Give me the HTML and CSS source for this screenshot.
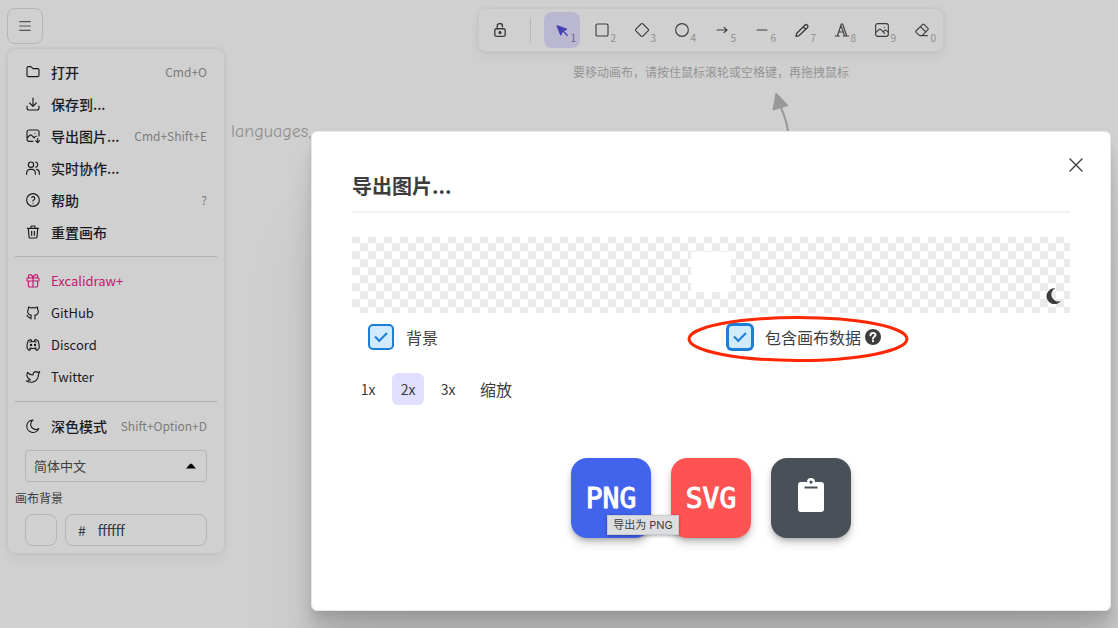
FILE: index.html
```html
<!DOCTYPE html>
<html lang="zh-CN">
<head>
<meta charset="utf-8">
<title>Excalidraw</title>
<meta name="viewport" content="width=device-width, initial-scale=1">
<link rel="stylesheet" href="styles.css">
</head>
<body>
<div class="app">
  <aside class="side">
    <button class="burger" type="button" aria-label="菜单"><svg class="icon" viewBox="0 0 24 24"><path d="M4 5.500h16M4 12h16M4 18.500h16"/></svg></button>
    <nav class="menu">
      <button class="item" type="button"><svg class="icon" viewBox="0 0 24 24"><path d="M5 4h4l3 3h7a2 2 0 0 1 2 2v8a2 2 0 0 1-2 2H5a2 2 0 0 1-2-2V6a2 2 0 0 1 2-2z"/></svg><span>打开</span><kbd>Cmd+O</kbd></button>
      <button class="item" type="button"><svg class="icon" viewBox="0 0 24 24"><path d="M3 15v3a3 3 0 0 0 3 3h12a3 3 0 0 0 3-3v-3M7 10.500l5 5 5-5M12 3v12.500"/></svg><span>保存到...</span></button>
      <button class="item" type="button"><svg class="icon" viewBox="0 0 24 24"><path d="M15 8h.01M12 20H6a3 3 0 0 1-3-3V6a3 3 0 0 1 3-3h12a3 3 0 0 1 3 3v6M3 15l4-4c.93-.9 2.070-.9 3 0l4 4M14 14l1-1c.62-.6 1.300-.8 2-.6M19 15.500V22M16 19l3 3 3-3"/></svg><span>导出图片...</span><kbd>Cmd+Shift+E</kbd></button>
      <button class="item" type="button"><svg class="icon" viewBox="0 0 24 24"><circle cx="9" cy="7" r="4"/><path d="M2.500 21.500v-2.500a5 5 0 0 1 5-5h3a5 5 0 0 1 5 5v2.500M16 3.100a4 4 0 0 1 0 7.800M21.500 21.500V19a5 5 0 0 0-4-4.900"/></svg><span>实时协作...</span></button>
      <button class="item" type="button"><svg class="icon" viewBox="0 0 24 24"><circle cx="12" cy="12" r="9.500"/><path d="M12 17v.01M12 13.500a1.500 1.500 0 0 1 1-1.500 2.600 2.600 0 1 0-3-4"/></svg><span>帮助</span><kbd>?</kbd></button>
      <button class="item" type="button"><svg class="icon" viewBox="0 0 24 24"><path d="M3.500 6.500h17M10 11v6M14 11v6M5 6.500l1 12.500a2 2 0 0 0 2 2h8a2 2 0 0 0 2-2l1-12.500M9 6.500V4a1 1 0 0 1 1-1h4a1 1 0 0 1 1 1v2.500"/></svg><span>重置画布</span></button>
      <hr>
      <a class="item plus" href="#plus"><svg class="icon" viewBox="0 0 24 24"><path d="M4 7.500h16a1 1 0 0 1 1 1V11a1 1 0 0 1-1 1H4a1 1 0 0 1-1-1V8.500a1 1 0 0 1 1-1zM12 7.500V21M19 12v7a2 2 0 0 1-2 2H7a2 2 0 0 1-2-2v-7M7.500 7.500a2.500 2.500 0 0 1 0-5c2-.1 3.600 1.900 4.500 5 .9-3.100 2.500-5.100 4.500-5a2.500 2.500 0 0 1 0 5"/></svg><span>Excalidraw+</span></a>
      <a class="item" href="#github"><svg class="icon" viewBox="0 0 24 24"><path d="M9 19c-4.300 1.400-4.300-2.500-6-3m12 5v-3.500c0-1 .1-1.400-.5-2 2.800-.3 5.500-1.400 5.500-6a4.600 4.600 0 0 0-1.300-3.200 4.200 4.200 0 0 0-.1-3.200s-1.100-.3-3.500 1.300a12.300 12.300 0 0 0-6.200 0C6.500 2.800 5.400 3.100 5.400 3.100a4.200 4.200 0 0 0-.1 3.200A4.600 4.600 0 0 0 4 9.500c0 4.600 2.700 5.700 5.500 6-.6.6-.6 1.200-.5 2V21"/></svg><span>GitHub</span></a>
      <a class="item" href="#discord"><svg class="icon" viewBox="0 0 24 24"><path d="M7 7.500c3.500-1 6.500-1 10 0M7 16.500c3.500 1 6.500 1 10 0M15.500 17c0 1 1.500 3 2 3 1.500 0 2.800-1.700 3.500-3 .7-1.700.5-5.800-1.500-11.500-1.500-1-3-1.300-4.500-1.500l-1 2.500M8.500 17c0 1-1.400 3-1.800 3-1.400 0-2.700-1.700-3.300-3-.7-1.700-.5-5.800 1.300-11.500C6.200 4.500 7.500 4.200 9 4l1 2.500"/><circle cx="9" cy="12" r="1"/><circle cx="15" cy="12" r="1"/></svg><span>Discord</span></a>
      <a class="item" href="#twitter"><svg class="icon" viewBox="0 0 24 24"><path d="M22 4c-1 .5-2 .7-3 1-1.100-1.300-2.800-1.300-4.400-.7S12 6.300 12 8v1c-3.200.1-6.100-1.400-8-4 0 0-4.200 7.400 4 11-1.900 1.200-3.700 2.100-6 2 3.300 1.800 6.900 2.400 10 1.500 3.600-1 6.500-3.700 7.700-7.700a13.800 13.800 0 0 0 .5-3.700c0-.2 1.500-2.800 1.800-4.100z"/></svg><span>Twitter</span></a>
      <hr>
      <button class="item" type="button"><svg class="icon" viewBox="0 0 24 24"><path d="M11.500 3h.5A7.500 7.500 0 0 0 20.500 16 9.300 9.300 0 1 1 11.500 3z"/></svg><span>深色模式</span><kbd>Shift+Option+D</kbd></button>
      <div class="language">
        <select aria-label="语言"><option>简体中文</option><option>English</option></select>
        <svg class="caret" viewBox="0 0 10 6"><path d="M0 5.500 4 1a1.300 1.300 0 0 1 2 0l4 4.500z"/></svg>
      </div>
      <label class="bg-label" for="bg">画布背景</label>
      <div class="color">
        <button class="swatch" type="button" aria-label="画布背景颜色"></button>
        <div class="hex"><span>#</span><input id="bg" type="text" value="ffffff"></div>
      </div>
    </nav>
  </aside>
  <div class="welcome">languages,</div>

  <main class="stage">
    <div class="toolbar">
      <button class="tool" type="button" aria-label="锁定"><svg class="icon" viewBox="0 0 20 20"><rect x="3.500" y="8.500" width="13" height="9.500" rx="2"/><path d="M6.500 8.500V5.500a3.300 3.300 0 0 1 6.600-.5V6"/><circle class="solid" cx="10" cy="13.200" r="1.200"/></svg></button>
      <span class="split"></span>
      <div class="tools">
        <button class="tool active" type="button" aria-label="选择"><svg class="icon" viewBox="0 0 20 20"><path class="solid" d="m4 5 4.500 11 2-4.500 5-2.500z"/><path d="m11 11 5.500 5.500"/></svg><small>1</small></button>
        <button class="tool" type="button" aria-label="矩形"><svg class="icon" viewBox="0 0 24 24"><rect x="3" y="3" width="18" height="18" rx="2"/></svg><small>2</small></button>
        <button class="tool" type="button" aria-label="菱形"><svg class="icon" viewBox="0 0 24 24"><path d="m10.500 3-8 8a1.500 1.500 0 0 0 0 2l8 8a2 2 0 0 0 3 0l8-8a1.500 1.500 0 0 0 0-2l-8-8a2 2 0 0 0-3 0z"/></svg><small>3</small></button>
        <button class="tool" type="button" aria-label="椭圆"><svg class="icon" viewBox="0 0 24 24"><circle cx="12" cy="12" r="9.500"/></svg><small>4</small></button>
        <button class="tool" type="button" aria-label="箭头"><svg class="icon" viewBox="0 0 24 24"><path d="M4.500 12h15M15 16l4.500-4L15 8"/></svg><small>5</small></button>
        <button class="tool" type="button" aria-label="线条"><svg class="icon" viewBox="0 0 24 24"><path d="M4.500 12h15"/></svg><small>6</small></button>
        <button class="tool" type="button" aria-label="画笔"><svg class="icon" viewBox="0 0 20 20"><path d="m6.500 17-4 1 1-4L13.500 4a2.200 2.200 0 0 1 3.200 3.200zM11.500 6l3 3"/></svg><small>7</small></button>
        <button class="tool" type="button" aria-label="文字"><svg class="icon" viewBox="0 0 24 24"><path d="M2 21h6M14 21h8M5 21 11 3h2l6 18M16 21 11 7M7 15h7"/></svg><small>8</small></button>
        <button class="tool" type="button" aria-label="图片"><svg class="icon" viewBox="0 0 24 24"><rect x="2.500" y="2.500" width="19" height="19" rx="3"/><path d="M15.500 8h.01M2.500 16l5-4.500c1-.9 2-.9 3 0L16 17M14 14.500l1.500-1.500c1-.9 2-.9 3 0l3 2.500"/></svg><small>9</small></button>
        <button class="tool" type="button" aria-label="橡皮"><svg class="icon" viewBox="0 0 24 24"><path d="M20 20.500H8.500L3 15.500a1.500 1.500 0 0 1 0-2l10-10a1.500 1.500 0 0 1 2 0l6 6a1.500 1.500 0 0 1 0 2L12.500 20M18 15 9.500 7"/></svg><small>0</small></button>
      </div>
    </div>
    <p class="hint">要移动画布，请按住鼠标滚轮或空格键，再拖拽鼠标</p>
    <svg class="arrow" viewBox="0 0 18 40"><path class="head" d="M4 2 1 19 16 14.500z"/><path class="tail" d="M9 17q5 10 7 23"/></svg>

    <section class="dialog" role="dialog" aria-labelledby="title">
      <button class="close" type="button" aria-label="关闭"><svg viewBox="0 0 14 14"><path d="m1 1 12 12M13 1 1 13"/></svg></button>
      <h2 id="title">导出图片...</h2>
      <div class="preview">
        <div class="paper"></div>
        <button class="dark" type="button" aria-label="深色模式"><svg viewBox="0 0 16 16"><path d="M9.500.2A8 8 0 1 0 15 12.800 6.300 6.300 0 0 1 9.500.2z"/></svg></button>
      </div>
      <div class="checks">
        <label class="check"><input type="checkbox" checked><span>背景</span></label>
        <label class="check focused"><input type="checkbox" checked><span>包含画布数据</span><svg class="help" viewBox="0 0 16 16"><circle cx="8" cy="8" r="8"/><path d="M5.500 6.200C5.700 3.100 10.600 3.300 10.500 6.100 10.500 7.800 8 7.700 8 9.500M8 11.800v.4"/></svg>
          <svg class="mark" viewBox="0 0 222 46"><ellipse cx="111" cy="23" rx="109" ry="21.500"/></svg></label>
      </div>
      <div class="scales">
        <button type="button">1x</button><button class="on" type="button">2x</button><button type="button">3x</button><span>缩放</span>
      </div>
      <div class="exports">
        <button class="png" type="button">PNG<span class="tip">导出为 PNG</span></button>
        <button class="svg" type="button">SVG</button>
        <button class="copy" type="button" aria-label="复制到剪贴板"><svg viewBox="0 0 26 34"><path fill-rule="evenodd" d="M3 4h6a4 4 0 0 1 8 0h6a3 3 0 0 1 3 3v24a3 3 0 0 1-3 3H3a3 3 0 0 1-3-3V7a3 3 0 0 1 3-3zm10-1.500a1.600 1.600 0 1 0 0 3.200 1.600 1.600 0 0 0 0-3.200zM6.500 8.500v2h13v-2z"/></svg></button>
      </div>
    </section>
  </main>
</div>
</body>
</html>
```
FILE: styles.css
```css
* { box-sizing: border-box; }
body {
  margin: 0;
  background: #d0d0d0;
  color: #1b1b1f;
  font: 14px/20px "Noto Sans CJK SC", sans-serif;
}
button, input, select { font: inherit; color: inherit; }
button { padding: 0; border: 0; background: none; cursor: pointer; }

.app {
  position: relative;
  display: grid;
  grid-template-columns: 304px minmax(0, 1fr);
  min-height: 100vh;
  overflow: hidden;
}
.icon {
  width: 16px;
  height: 16px;
  flex: none;
  fill: none;
  stroke: currentColor;
  stroke-width: 1.7;
  stroke-linecap: round;
  stroke-linejoin: round;
}
.icon .solid { fill: currentColor; }

/* Side menu */
.side { padding: 8px 79px 8px 7px; }
.burger {
  display: grid;
  place-items: center;
  width: 36px;
  height: 36px;
  margin-bottom: 4px;
  border: 1px solid #b5b5b5;
  border-radius: 8px;
  color: #555;
}
.menu {
  padding: 7px;
  border: 1px solid #c5c5c5;
  border-radius: 8px;
  box-shadow: 0 7px 14px rgba(0, 0, 0, .04), 0 0 3px rgba(0, 0, 0, .07);
}
.item {
  display: flex;
  align-items: center;
  gap: 10px;
  width: 100%;
  height: 32px;
  padding: 0 10px;
  color: #1b1b1f;
  text-decoration: none;
  white-space: nowrap;
}
button.item { font-weight: 500; }
a.item { font-size: 13px; }
.item kbd {
  margin-left: auto;
  color: #7c7c7c;
  font: 400 12px/20px "Noto Sans CJK SC", sans-serif;
}
.item.plus { color: #c2186f; }
.menu hr { height: 1px; margin: 8px 0; border: 0; background: #b0b0b0; }
.language { position: relative; margin: 8px 10px; }
.language select {
  display: block;
  width: 100%;
  height: 32px;
  padding: 0 8px;
  border: 1px solid #b5b5b5;
  border-radius: 4px;
  background: none;
  appearance: none;
  color: #3d3d3d;
  font-size: 13px;
}
.caret { position: absolute; right: 11px; top: 13px; width: 10px; height: 6px; pointer-events: none; }
.bg-label { display: block; margin-bottom: 8px; font-size: 12px; line-height: 16px; color: #3d3d3d; }
.color { display: flex; gap: 8px; padding: 0 10px; }
.swatch { width: 32px; height: 32px; border: 1px solid #b5b5b5; border-radius: 8px; }
.hex {
  display: flex;
  flex: 1;
  align-items: center;
  gap: 12px;
  min-width: 0;
  height: 32px;
  padding: 0 12px;
  border: 1px solid #b5b5b5;
  border-radius: 8px;
  color: #343a40;
}
.hex input { flex: 1; min-width: 0; padding: 0; border: 0; background: none; outline: 0; }

/* Canvas text behind the dialog */
.welcome {
  position: absolute;
  left: 231px;
  top: 120px;
  color: #919191;
  font: 400 18px/24px "Comic Neue", "Lato", sans-serif;
}

/* Toolbar */
.stage {
  position: relative;
  display: flex;
  flex-direction: column;
  align-items: center;
  padding: 8px 7px 17px;
}
.toolbar {
  display: flex;
  align-items: center;
  padding: 3px;
  border: 1px solid #c8c8c8;
  border-radius: 8px;
  box-shadow: 0 5px 12px rgba(0, 0, 0, .05), 0 0 3px rgba(0, 0, 0, .07);
}
.tools { display: flex; gap: 4px; }
.tool {
  position: relative;
  display: grid;
  place-items: center;
  width: 36px;
  height: 36px;
  border-radius: 8px;
  color: #3d3d3d;
}
.tool small {
  position: absolute;
  right: 4px;
  bottom: 4px;
  color: #8f8f8f;
  font-size: 10px;
  line-height: 12px;
}
.tool.active { background: #bab7d3; color: #4640b0; }
.tool.active small { color: #66627f; }
.split { width: 1px; height: 24px; margin: 0 13px 0 12px; background: #b8b8b8; }
.hint { margin: 10px 0 0; color: #949494; font-size: 12px; line-height: 20px; }
.arrow { position: absolute; left: calc(50% + 61px); top: 91px; width: 18px; height: 40px; fill: none; }
.arrow .head { fill: #989898; stroke: #989898; stroke-linejoin: round; }
.arrow .tail { stroke: #989898; stroke-width: 2; }

/* Export dialog */
.dialog {
  position: relative;
  width: 100%;
  max-width: 800px;
  margin-top: 49px;
  padding: 40px 40px 72px;
  border: 1px solid #e8e8e8;
  border-radius: 6px;
  background: #fff;
  color: #3d3d3d;
  box-shadow: 0 100px 80px rgba(0, 0, 0, .07), 0 42px 33px rgba(0, 0, 0, .05), 0 22px 18px rgba(0, 0, 0, .04), 0 12px 10px rgba(0, 0, 0, .04), 0 7px 5px rgba(0, 0, 0, .03), 0 3px 2px rgba(0, 0, 0, .02), 0 16px 32px rgba(0, 0, 0, .05);
}
.close { position: absolute; top: 21px; right: 22px; width: 24px; height: 24px; display: grid; place-items: center; }
.close svg { width: 14px; height: 14px; fill: none; stroke: #3d3d3d; stroke-width: 1.4; stroke-linecap: round; }
.dialog h2 {
  margin: 0 0 24px;
  padding-bottom: 11px;
  border-bottom: 2px solid #f1f1f1;
  font-size: 20px;
  line-height: 28px;
}
.preview {
  position: relative;
  display: grid;
  justify-content: center;
  align-content: start;
  height: 76px;
  padding-top: 15px;
  background: repeating-conic-gradient(#fff 0 25%, #ebebeb 0 50%) 0 -2px / 16px 16px;
}
.paper { width: 40px; height: 40px; background: #fff; }
.dark { position: absolute; right: 8px; bottom: 9px; width: 16px; height: 16px; }
.dark svg { display: block; fill: #3d3d3d; }
.checks { display: grid; grid-template-columns: 1fr 1fr; margin-top: 8px; font-size: 16px; }
.check { position: relative; display: flex; align-items: center; height: 32px; padding-left: 16px; }
.check input {
  width: 26px;
  height: 26px;
  margin: 0 12px 0 0;
  border: 2px solid #1c7ed6;
  border-radius: 5px;
  appearance: none;
  background: #d0ebff;
  display: grid;
  place-items: center;
}
.check input::before {
  content: "";
  width: 10px;
  height: 5px;
  margin-bottom: 3px;
  border: solid #1c7ed6;
  border-width: 0 0 2px 2px;
  transform: rotate(-45deg);
}
.focused input { box-shadow: 0 0 0 1px #1c7ed6; }
.help { width: 16px; height: 16px; margin-left: 4px; fill: #3d3d3d; }
.help path { fill: none; stroke: #fff; stroke-width: 2; stroke-linecap: round; }
.mark { position: absolute; left: -24px; top: -5px; width: 222px; height: 46px; fill: none; stroke: #ff2600; stroke-width: 3; pointer-events: none; }
.scales { display: flex; align-items: center; gap: 8px; margin-top: 20px; }
.scales button { width: 32px; height: 32px; border-radius: 6px; }
.scales .on { background: #e0dfff; }
.scales span { margin-left: 8px; font-size: 16px; }
.exports { display: flex; justify-content: center; gap: 20px; margin-top: 53px; }
.exports button {
  position: relative;
  display: grid;
  place-items: center;
  width: 80px;
  height: 80px;
  padding-top: 2px;
  border-radius: 16px;
  box-shadow: 0 3px 5px -1px rgba(0, 0, 0, .24), 0 6px 10px rgba(0, 0, 0, .14);
  color: #fff;
  font: 400 28px/40px "DejaVu Sans Mono", monospace;
  -webkit-text-stroke: 1px #fff;
}
.exports .png { z-index: 1; background: #4263eb; }
.exports .svg { background: #ff5252; }
.exports .copy { background: #495057; }
.copy svg { width: 26px; height: 34px; fill: #fff; margin-bottom: 8px; }
.exports .tip {
  position: absolute;
  left: 36px;
  top: 57px;
  width: 72px;
  border: 1px solid #c8cbd0;
  background: #dcdee0;
  box-shadow: 0 1px 3px rgba(0, 0, 0, .3);
  color: #3d3d3d;
  font: 400 11px/18px "Inter", "Noto Sans CJK SC", sans-serif;
  -webkit-text-stroke: 0;
  white-space: nowrap;
}
```
